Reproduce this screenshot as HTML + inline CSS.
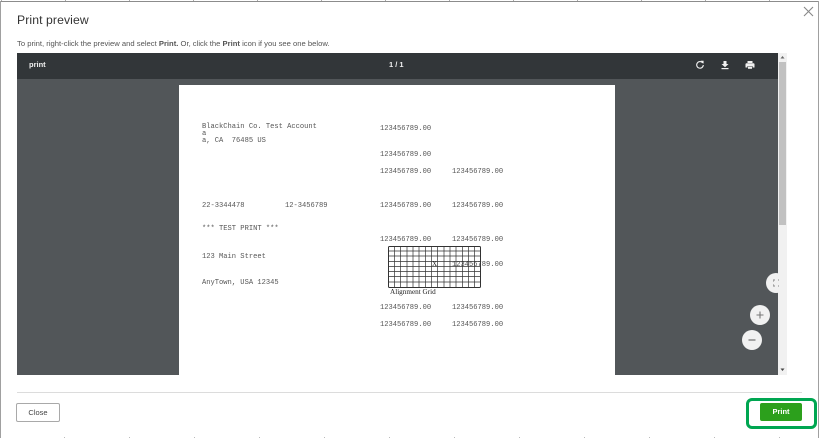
<!DOCTYPE html>
<html><head><meta charset="utf-8"><style>
html,body{margin:0;padding:0}
body{width:820px;height:438px;overflow:hidden;background:#fff;position:relative;font-family:"Liberation Sans",sans-serif}
div,span,svg{position:absolute}
#w{left:0;top:0;width:820px;height:438px;filter:blur(.35px)}
.m{font:7.1px/8px "Liberation Mono",monospace;color:#555;white-space:pre;margin-top:1px}
.t{white-space:nowrap}
.c{width:20px;height:20px;border-radius:50%;background:#f1f1f1}
</style></head><body><div id="w">
<div style="left:0;top:0;width:820px;height:1px;background:repeating-linear-gradient(90deg,#fff 0 1px,#aaa 1px 2px,#fff 2px 64px)"></div>
<div style="left:0;top:437px;width:818px;height:1px;background:repeating-linear-gradient(90deg,#fff 0 64px,#bbb 64px 65px,#fff 65px 64px)"></div>
<div style="left:0;top:1px;width:818px;height:1px;background:#8c8c8c"></div>
<div style="left:0;top:1px;width:1px;height:437px;background:#a0a0a0"></div>
<div style="left:818px;top:1px;width:1px;height:437px;background:#a0a0a0"></div>
<div class="t" style="left:17px;top:12px;font-size:12.2px;line-height:16px;color:#333;letter-spacing:.1px">Print preview</div>
<div class="t" style="left:17px;top:39px;font-size:7.65px;line-height:10px;color:#555">To print, right-click the preview and select <b>Print.</b> Or, click the <b>Print</b> icon if you see one below.</div>
<svg style="left:803px;top:6px" width="11" height="11" viewBox="0 0 11 11"><path d="M1 1L10 10M10 1L1 10" stroke="#888" stroke-width="1.1" fill="none"/></svg>

<div style="left:17px;top:53px;width:761px;height:322px;background:#525659;overflow:hidden"></div>
<div style="left:17px;top:53px;width:761px;height:26px;background:#323639"></div>
<div class="t" style="left:29px;top:60px;font-size:7.5px;line-height:10px;font-weight:bold;color:#f1f1f1">print</div>
<div class="t" style="left:389px;top:60px;font-size:7.5px;line-height:10px;color:#f1f1f1;font-weight:bold">1 / 1</div>
<svg style="left:695px;top:60px" width="10" height="10" viewBox="0 0 10 10"><path d="M7.7 3A3.300 3.300 0 1 0 8.300 5" stroke="#f1f1f1" stroke-width="1.100" fill="none"/><path d="M5.600 .8L8.600 .8L8.600 3.800Z" fill="#f1f1f1"/></svg>
<svg style="left:720px;top:60px" width="10" height="10" viewBox="0 0 10 10"><path d="M3.500 1H6.500V4H8.500L5 7.200L1.500 4H3.500Z" fill="#f1f1f1"/><rect x="1.500" y="8" width="7" height="1.200" fill="#f1f1f1"/></svg>
<svg style="left:745px;top:60px" width="10" height="10" viewBox="0 0 10 10"><rect x="2.500" y="1" width="5" height="2" fill="#f1f1f1"/><path d="M1.500 3.300H8.500Q9.500 3.300 9.500 4.300V7.500H7.500V6H2.500V7.500H.5V4.300Q.5 3.300 1.500 3.300Z" fill="#f1f1f1"/><rect x="3" y="6.500" width="4" height="2.300" fill="#f1f1f1"/></svg>

<div style="left:778px;top:53px;width:9px;height:322px;background:#f1f1f1"></div>
<div style="left:779px;top:62px;width:7px;height:163px;background:#c1c1c1"></div>
<svg style="left:780px;top:55px" width="5" height="5"><path d="M.5 3.500L2.500 1L4.500 3.500Z" fill="#666"/></svg>
<svg style="left:780px;top:367px" width="5" height="5"><path d="M.5 1.500L2.500 4L4.500 1.500Z" fill="#444"/></svg>

<div style="left:179px;top:85px;width:436px;height:290px;background:#fff"></div>
<div class="m" style="left:202px;top:122px">BlackChain Co. Test Account</div>
<div class="m" style="left:202px;top:129px">a</div>
<div class="m" style="left:202px;top:136px">a, CA  76485 US</div>
<div class="m" style="left:380px;top:124px">123456789.00</div>
<div class="m" style="left:380px;top:150px">123456789.00</div>
<div class="m" style="left:380px;top:167px">123456789.00</div>
<div class="m" style="left:452px;top:167px">123456789.00</div>
<div class="m" style="left:202px;top:201px">22-3344478</div>
<div class="m" style="left:285px;top:201px">12-3456789</div>
<div class="m" style="left:380px;top:201px">123456789.00</div>
<div class="m" style="left:452px;top:201px">123456789.00</div>
<div class="m" style="left:202px;top:224px">*** TEST PRINT ***</div>
<div class="m" style="left:380px;top:235px">123456789.00</div>
<div class="m" style="left:452px;top:235px">123456789.00</div>
<div class="m" style="left:202px;top:252px">123 Main Street</div>
<div class="m" style="left:452px;top:260px">123456789.00</div>
<div class="m" style="left:202px;top:278px">AnyTown, USA 12345</div>
<div class="m" style="left:380px;top:303px">123456789.00</div>
<div class="m" style="left:452px;top:303px">123456789.00</div>
<div class="m" style="left:380px;top:320px">123456789.00</div>
<div class="m" style="left:452px;top:320px">123456789.00</div>
<svg style="left:387px;top:245px" width="95" height="44" viewBox="0 0 95 44"><rect x="1.500" y="1.500" width="92" height="41" rx="1" fill="none" stroke="#333" stroke-width="1"/><path d="M7.500 1V43M13.500 1V43M20 1V43M26 1V43M32 1V43M38.500 1V43M44.500 1V43M50.500 1V43M57 1V43M63 1V43M69 1V43M75.500 1V43M81.500 1V43M87.500 1V43M1 6H94M1 11H94M1 16.500H94M1 21.500H94M1 26.500H94M1 31.500H94M1 37H94" stroke="#333" stroke-width=".7" fill="none"/></svg>
<div class="t" style="left:432px;top:260px;font:7px/8px 'Liberation Serif',serif;color:#222">X</div>
<div class="t" style="left:390px;top:288px;font:7.2px/9px 'Liberation Serif',serif;color:#222">Alignment Grid</div>

<div class="c" style="left:766px;top:273px"></div>
<div style="left:778px;top:273px;width:9px;height:20px;background:#f1f1f1"></div>
<svg style="left:773px;top:279px" width="6" height="8"><path d="M0 3V1H2M5 1H6M0 5V7H2M5 7H6" stroke="#888" stroke-width="1" fill="none"/></svg>
<div class="c" style="left:750px;top:305px"></div>
<svg style="left:755px;top:310px" width="10" height="10"><path d="M5 1.500V8.500M1.500 5H8.500" stroke="#777" stroke-width="1.100"/></svg>
<div class="c" style="left:742px;top:330px"></div>
<svg style="left:747px;top:335px" width="10" height="10"><path d="M1.500 5H8.500" stroke="#777" stroke-width="1.300"/></svg>

<div style="left:17px;top:392px;width:785px;height:1px;background:#dcdcdc"></div>
<div class="t" style="left:16px;top:403px;width:42px;height:17px;border:1px solid #a9a9a9;border-radius:2px;background:#fff;font-size:7.5px;line-height:17px;text-align:center;color:#444">Close</div>
<div style="left:746px;top:398px;width:65px;height:25px;border:3px solid #00a651;border-radius:6px"></div>
<div class="t" style="left:760px;top:403px;width:42px;height:18px;background:#2ca01c;border-radius:2px;font-size:7.5px;font-weight:bold;line-height:18px;text-align:center;color:#fff">Print</div>
</div></body></html>
